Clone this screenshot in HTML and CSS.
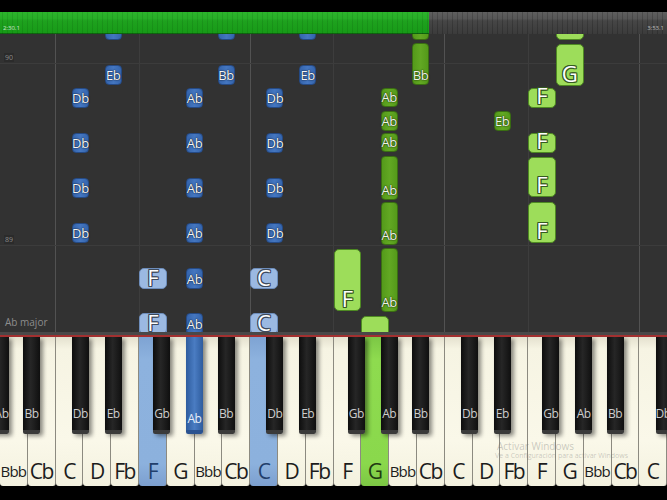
FILE: index.html
```html
<!DOCTYPE html>
<html>
<head>
<meta charset="utf-8">
<link rel="stylesheet" href="styles.css">
</head>
<body>
<div class="screen">
  <div class="topbar"></div>
  <div class="progress">
    <div class="fill"></div>
    <span class="t t-left">2:30.1</span>
    <span class="t t-right">3:53.1</span>
  </div>
  <div class="roll">
    <div class="vl bright" style="left:55px"></div>
    <div class="vl" style="left:139px"></div>
    <div class="vl bright" style="left:250px"></div>
    <div class="vl" style="left:333px"></div>
    <div class="vl bright" style="left:444px"></div>
    <div class="vl" style="left:528px"></div>
    <div class="vl bright" style="left:639px"></div>
    <div class="hl" style="top:29px"></div>
    <div class="hl" style="top:211px"></div>
    <span class="mnum" style="top:19px">90</span>
    <span class="mnum" style="top:201px">89</span>

    <!-- left hand (blue) -->
    <div class="n db" style="left:104.7px;top:-14px;height:20px"></div>
    <div class="n db" style="left:217.5px;top:-14px;height:20px"></div>
    <div class="n db" style="left:299.2px;top:-14px;height:20px"></div>
    <div class="n db" style="left:104.7px;top:31px;height:20px"><span>Eb</span></div>
    <div class="n db" style="left:217.5px;top:31px;height:20px"><span>Bb</span></div>
    <div class="n db" style="left:299.2px;top:31px;height:20px"><span>Eb</span></div>

    <div class="n db" style="left:71.9px;top:54px;height:20px"><span>Db</span></div>
    <div class="n db" style="left:186px;top:54px;height:20px"><span>Ab</span></div>
    <div class="n db" style="left:266.4px;top:54px;height:20px"><span>Db</span></div>
    <div class="n db" style="left:71.9px;top:99px;height:20px"><span>Db</span></div>
    <div class="n db" style="left:186px;top:99px;height:20px"><span>Ab</span></div>
    <div class="n db" style="left:266.4px;top:99px;height:20px"><span>Db</span></div>
    <div class="n db" style="left:71.9px;top:144px;height:20px"><span>Db</span></div>
    <div class="n db" style="left:186px;top:144px;height:20px"><span>Ab</span></div>
    <div class="n db" style="left:266.4px;top:144px;height:20px"><span>Db</span></div>
    <div class="n db" style="left:71.9px;top:189px;height:20px"><span>Db</span></div>
    <div class="n db" style="left:186px;top:189px;height:20px"><span>Ab</span></div>
    <div class="n db" style="left:266.4px;top:189px;height:20px"><span>Db</span></div>

    <div class="n lb" style="left:139px;top:234px;height:21px"><span>F</span></div>
    <div class="n db" style="left:186px;top:234px;height:21px"><span>Ab</span></div>
    <div class="n lb" style="left:250px;top:234px;height:21px"><span>C</span></div>
    <div class="n lb tail" style="left:139px;top:290px;height:10px"></div>
    <div class="n db tail" style="left:186px;top:290px;height:10px"></div>
    <div class="n lb tail" style="left:250px;top:290px;height:10px"></div>
    <div class="n lb" style="left:139px;top:279px;height:21px"><span>F</span></div>
    <div class="n db" style="left:186px;top:279px;height:21px"><span>Ab</span></div>
    <div class="n lb" style="left:250px;top:279px;height:21px"><span>C</span></div>

    <!-- right hand (green) -->
    <div class="n dg" style="left:412.1px;top:-40px;height:46px"></div>
    <div class="n dg" style="left:412.1px;top:9px;height:42px"><span>Bb</span></div>
    <div class="n dg" style="left:380.6px;top:54px;height:19px"><span>Ab</span></div>
    <div class="n dg" style="left:380.6px;top:76.5px;height:20px"><span>Ab</span></div>
    <div class="n dg" style="left:380.6px;top:99px;height:19px"><span>Ab</span></div>
    <div class="n dg" style="left:380.6px;top:122px;height:44px"><span>Ab</span></div>
    <div class="n dg" style="left:380.6px;top:168px;height:43px"><span>Ab</span></div>
    <div class="n dg" style="left:380.6px;top:214px;height:64px"><span>Ab</span></div>
    <div class="n dg" style="left:493.75px;top:77px;height:20px"><span>Eb</span></div>

    <div class="n lg" style="left:333.5px;top:215px;height:62px"><span>F</span></div>
    <div class="n lg" style="left:361.3px;top:282px;height:30px"></div>
    <div class="n lg" style="left:555.8px;top:-40px;height:46px"></div>
    <div class="n lg" style="left:555.8px;top:10px;height:42px"><span>G</span></div>
    <div class="n lg" style="left:528px;top:54px;height:20px"><span>F</span></div>
    <div class="n lg" style="left:528px;top:99px;height:20px"><span>F</span></div>
    <div class="n lg" style="left:528px;top:123px;height:40px"><span>F</span></div>
    <div class="n lg" style="left:528px;top:168px;height:41px"><span>F</span></div>

    <span class="keysig">Ab major</span>
  </div>

  <div class="keyboard">
    <div class="kb-bevel"></div>
    <div class="kb-red"></div>
    <div class="keys">
      <div class="w"><span class="small">Bbb</span></div>
      <div class="w"><span>Cb</span></div>
      <div class="w"><span>C</span></div>
      <div class="w"><span>D</span></div>
      <div class="w"><span>Fb</span></div>
      <div class="w on-blue"><span>F</span></div>
      <div class="w"><span>G</span></div>
      <div class="w"><span class="small">Bbb</span></div>
      <div class="w"><span>Cb</span></div>
      <div class="w on-blue"><span>C</span></div>
      <div class="w"><span>D</span></div>
      <div class="w"><span>Fb</span></div>
      <div class="w"><span>F</span></div>
      <div class="w on-green"><span>G</span></div>
      <div class="w"><span class="small">Bbb</span></div>
      <div class="w"><span>Cb</span></div>
      <div class="w"><span>C</span></div>
      <div class="w"><span>D</span></div>
      <div class="w"><span>Fb</span></div>
      <div class="w"><span>F</span></div>
      <div class="w"><span>G</span></div>
      <div class="w"><span class="small">Bbb</span></div>
      <div class="w"><span>Cb</span></div>
      <div class="w"><span>C</span></div>

      <div class="b edge-l" style="left:-8.5px"><span>Ab</span></div>
      <div class="b" style="left:23px"><span>Bb</span></div>
      <div class="b" style="left:71.9px"><span>Db</span></div>
      <div class="b" style="left:104.7px"><span>Eb</span></div>
      <div class="b" style="left:153.25px"><span>Gb</span></div>
      <div class="b on-dblue" style="left:186px"><span>Ab</span></div>
      <div class="b" style="left:217.5px"><span>Bb</span></div>
      <div class="b" style="left:266.4px"><span>Db</span></div>
      <div class="b" style="left:299.2px"><span>Eb</span></div>
      <div class="b" style="left:347.8px"><span>Gb</span></div>
      <div class="b" style="left:380.6px"><span>Ab</span></div>
      <div class="b" style="left:412.1px"><span>Bb</span></div>
      <div class="b" style="left:461px"><span>Db</span></div>
      <div class="b" style="left:493.75px"><span>Eb</span></div>
      <div class="b" style="left:542.3px"><span>Gb</span></div>
      <div class="b" style="left:575.1px"><span>Ab</span></div>
      <div class="b" style="left:606.6px"><span>Bb</span></div>
      <div class="b edge-r" style="left:655.5px"><span>Db</span></div>

      <div class="watermark">
        <div class="wm1">Activar Windows</div>
        <div class="wm2">Ve a Configuración para activar Windows</div>
      </div>
    </div>
    <div class="kb-bottom"></div>
  </div>
</div>
</body>
</html>
```
FILE: styles.css
```css
html, body {
  margin: 0;
  padding: 0;
  background: #000;
}
body {
  width: 667px;
  height: 500px;
  overflow: hidden;
  font-family: "Open Sans", "Noto Sans", sans-serif;
}
.screen {
  display: flex;
  flex-direction: column;
  width: 667px;
  height: 500px;
}
.topbar {
  height: 12px;
  background: #000;
}

/* progress bar */
.progress {
  position: relative;
  height: 22px;
  display: flex;
  background:
    repeating-linear-gradient(90deg, rgba(0,0,0,0) 0 2px, rgba(0,0,0,0.18) 2px 3px, rgba(0,0,0,0) 3px 5px),
    linear-gradient(#5f5f5f 0, #565656 30%, #464646 40%, #3b3b3b 100%);
}
.fill {
  width: 429px;
  background:
    repeating-linear-gradient(90deg, rgba(0,0,0,0) 0 2px, rgba(0,40,0,0.12) 2px 3px, rgba(0,0,0,0) 3px 5px),
    linear-gradient(#2cb52c 0, #27ae27 30%, #1ea21e 40%, #179a17 100%);
  box-shadow: inset 0 -1px 0 rgba(0,0,0,0.35);
}
.t {
  position: absolute;
  bottom: 2px;
  font-size: 6px;
  line-height: 8px;
  color: #e8f0e8;
  opacity: 0.85;
}
.t-left { left: 3px; }
.t-right { right: 3px; color: #cfcfcf; }

/* roll */
.roll {
  position: relative;
  height: 298px;
  background: #323232;
  overflow: hidden;
}
.vl {
  position: absolute;
  top: 0;
  bottom: 0;
  width: 1px;
  background: #3d3d3d;
}
.vl.bright { background: #525252; }
.hl {
  position: absolute;
  left: 0;
  right: 0;
  height: 1px;
  background: #3c3c3c;
}
.mnum {
  position: absolute;
  left: 4px;
  font-size: 7px;
  line-height: 9px;
  padding: 0 1px;
  color: #8a8a8a;
  background: #2b2b2b;
}
.keysig {
  position: absolute;
  left: 5px;
  bottom: 4px;
  font-size: 10px;
  line-height: 12px;
  color: #8d8d8d;
}

/* notes */
.n {
  position: absolute;
  box-sizing: border-box;
  border-radius: 4px;
  display: flex;
  flex-direction: column;
  justify-content: flex-end;
  align-items: center;
}
.n.tail {
  border-radius: 0;
  border-top: 0;
  border-bottom: 0;
}
.n span {
  display: block;
  text-align: center;
  white-space: nowrap;
}
.db, .dg {
  width: 17px;
}
.db span, .dg span {
  font-size: 13px;
  line-height: 18px;
  letter-spacing: -0.4px;
  color: #f2f4f8;
  text-shadow: 0 0 1px rgba(0,0,0,0.9), 0 0 2px rgba(0,0,0,0.6);
}
.db {
  background: linear-gradient(90deg, #3565ad, #4476c0 50%, #3565ad);
  border: 1px solid #254a85;
}
.dg {
  background: linear-gradient(90deg, #549a1a, #62a823 50%, #549a1a);
  border: 1px solid #3a6e12;
}
.dg span { color: #eef5e6; }
.lb, .lg {
  width: 27.8px;
  border-radius: 5px;
}
.lb span, .lg span {
  font-size: 22px;
  line-height: 19px;
  margin-bottom: 1px;
  color: #fff;
}
.lg span { margin-bottom: 2px; }
.lb {
  background: #9bb9e2;
  border: 1px solid #6d8dbb;
}
.lb span {
  text-shadow: 1px 0 0 #3d4a5c, -1px 0 0 #3d4a5c, 0 1px 0 #3d4a5c, 0 -1px 0 #3d4a5c,
               1px 1px 0 #3d4a5c, -1px -1px 0 #3d4a5c, 1px -1px 0 #3d4a5c, -1px 1px 0 #3d4a5c;
}
.lg {
  background: #9ddd5a;
  border: 1px solid #4e8a22;
}
.lg span {
  text-shadow: 1px 0 0 #355a20, -1px 0 0 #355a20, 0 1px 0 #355a20, 0 -1px 0 #355a20,
               1px 1px 0 #355a20, -1px -1px 0 #355a20, 1px -1px 0 #355a20, -1px 1px 0 #355a20;
}

/* keyboard */
.keyboard {
  position: relative;
  flex: 1;
  display: flex;
  flex-direction: column;
}
.kb-bevel {
  height: 3px;
  background: #4a4848;
}
.kb-red {
  height: 2px;
  background: #a33030;
}
.keys {
  position: relative;
  height: 149px;
  display: flex;
  overflow: hidden;
}
.w {
  flex: 1;
  box-sizing: border-box;
  background: linear-gradient(#e4e1cf 0, #f6f4e3 12px, #faf8e9 70%, #f3f1df 100%);
  border-right: 1px solid #8c8a80;
  border-radius: 0 0 3px 3px;
  display: flex;
  align-items: flex-end;
  justify-content: center;
  padding-bottom: 6px;
}
.w span {
  font-size: 21px;
  line-height: 18px;
  letter-spacing: -1.5px;
  color: #1c1c1c;
  white-space: nowrap;
}
.w span.small {
  font-size: 15px;
  letter-spacing: -0.8px;
  line-height: 16px;
  margin-bottom: 1px;
}
.w.on-blue {
  background: linear-gradient(#7ea3d3 0, #8db2de 15%, #8cb1dd 85%, #7c9fcf 100%);
}
.w.on-blue span { color: #223f6b; }
.w.on-green {
  background: linear-gradient(#7cc745 0, #8edb4f 15%, #8ad84c 85%, #7cc744 100%);
}
.w.on-green span { color: #1f3a12; }

.b {
  position: absolute;
  top: 0;
  width: 17px;
  height: 97px;
  box-sizing: border-box;
  background: linear-gradient(90deg, #0d0d0d, #262626 45%, #1c1c1c 70%, #0f0f0f);
  border-bottom: 4px solid #3a3a3a;
  border-radius: 0 0 2px 2px;
  box-shadow: 3px 2px 4px rgba(0,0,0,0.45);
  display: flex;
  align-items: flex-end;
  justify-content: center;
  padding-bottom: 9px;
}
.b span {
  font-size: 12px;
  line-height: 14px;
  letter-spacing: -0.5px;
  color: #cdcdcd;
  white-space: nowrap;
}
.b.edge-l { justify-content: flex-end; }
.b.edge-r { justify-content: flex-start; }
.b.on-dblue {
  background: linear-gradient(90deg, #2e5c9e, #4a7cc2 50%, #2e5c9e);
  border-bottom: 4px solid #2a5290;
  padding-bottom: 4px;
}
.b.on-dblue span { color: #e6eef8; }

.watermark {
  position: absolute;
  left: 497px;
  top: 104px;
  color: rgba(110,110,110,0.35);
  white-space: nowrap;
}
.wm1 {
  font-size: 10px;
  line-height: 11px;
}
.wm2 {
  font-size: 7px;
  line-height: 8px;
  margin-left: -2px;
}
.kb-bottom {
  flex: 1;
  background: #000;
}
```
